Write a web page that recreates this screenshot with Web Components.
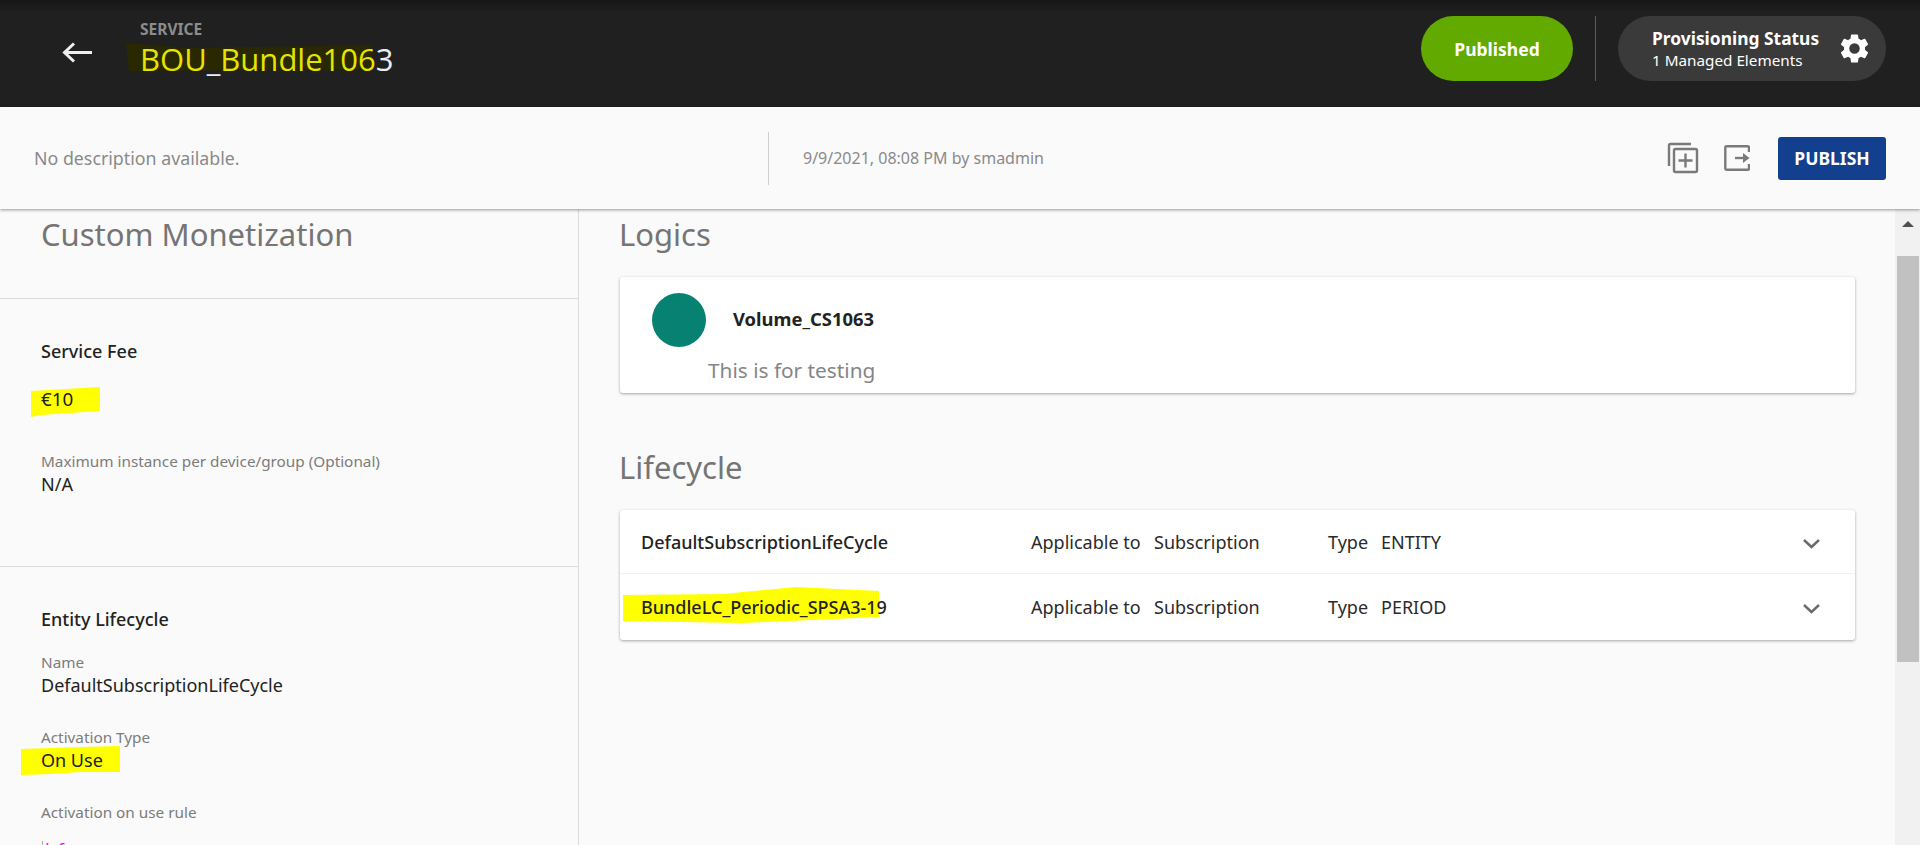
<!DOCTYPE html>
<html>
<head>
<meta charset="utf-8">
<title>BOU_Bundle1063</title>
<style>
    html, body{
        margin: 0;
        height: 845px;
        overflow: hidden;
        background: #fafafa;
        font-family: "Noto Sans", "Open Sans", sans-serif;
    }
</style>
</head>
<body>
<service-page></service-page>

<template id="tpl-topbar">
    <style>
        :host{
            display: flex;
            align-items: center;
            height: 107px;
            box-sizing: border-box;
            padding: 0 34px 10px 62px;
            background: linear-gradient(#161616 0, #202020 12px);
            color: #fff;
        }
        .back{ width: 30px; height: 21px; margin-right: 48px; margin-top: 8px; }
        .names{ flex: 1; position: relative; top: 1px; }
        .kind{ font-size: 15.5px; font-weight: 700; color: #8c8c8c; line-height: 18px; }
        .title{ position: relative; font-size: 31px; line-height: 42px; color: #e4e400; white-space: nowrap; font-family: "Open Sans", sans-serif; }
        .title span{ position: relative; }
        .title .rest{ color: #e8eef4; }
        .smear{ position: absolute; left: -14px; top: 5px; width: 246px; height: 32px; }
        .status{
            display: flex; align-items: center; justify-content: center;
            width: 152px; height: 65px; border-radius: 33px;
            background: #62aa00; font-size: 17.5px; font-weight: 700;
        }
        .sep{ width: 1px; height: 65px; margin: 0 22px; background: #5c5c5c; }
        .prov{
            display: flex; align-items: center; justify-content: space-between;
            width: 268px; height: 65px; box-sizing: border-box;
            padding: 0 14px 0 34px; border-radius: 33px; background: #3a3a3a;
        }
        .prov b{ display: block; font-size: 17.4px; line-height: 24px; }
        .prov small{ display: block; font-size: 15.25px; line-height: 21px; }
        .gear{ width: 35px; height: 35px; }
    </style>
    <svg class="back" viewBox="0 0 30 21" fill="none" stroke="#eeeeee" stroke-width="3"><path d="M30 10.5H3M12 1.5L2.5 10.5L12 19.5"/></svg>
    <div class="names">
        <div class="kind">SERVICE</div>
        <div class="title">
            <svg class="smear" viewBox="0 0 246 32"><path d="M0 0L60 5L246 2V26L120 27L3 28Z" fill="#2a2800"/></svg>
            <span>BOU<span class="rest">_</span>Bundle106<span class="rest">3</span></span>
        </div>
    </div>
    <div class="status">Published</div>
    <div class="sep"></div>
    <div class="prov">
        <div><b>Provisioning Status</b><small>1 Managed Elements</small></div>
        <svg class="gear" viewBox="0 0 24 24" fill="#fff"><path d="M19.14 12.94c.04-.3.06-.61.06-.94s-.02-.64-.07-.94l2.03-1.58a.49.49 0 0 0 .12-.61l-1.92-3.32a.49.49 0 0 0-.59-.22l-2.39.96a7 7 0 0 0-1.62-.94l-.36-2.54a.48.48 0 0 0-.48-.41h-3.84a.48.48 0 0 0-.47.41l-.36 2.54c-.59.24-1.13.57-1.62.94l-2.39-.96a.49.49 0 0 0-.59.22L2.74 8.87a.48.48 0 0 0 .12.61l2.03 1.58c-.05.3-.09.63-.09.94s.02.64.07.94l-2.03 1.58a.49.49 0 0 0-.12.61l1.92 3.32c.12.22.37.29.59.22l2.39-.96c.5.38 1.03.7 1.62.94l.36 2.54c.05.24.24.41.48.41h3.84c.24 0 .44-.17.47-.41l.36-2.54c.59-.24 1.13-.56 1.62-.94l2.39.96c.22.08.47 0 .59-.22l1.92-3.32a.48.48 0 0 0-.12-.61zM12 15.6A3.6 3.6 0 1 1 12 8.4a3.6 3.6 0 0 1 0 7.2z"/></svg>
    </div>
</template>

<template id="tpl-toolbar">
    <style>
        :host{
            display: flex;
            align-items: center;
            position: relative;
            z-index: 2;
            height: 102px;
            box-sizing: border-box;
            padding: 0 34px 0 34px;
            background: #fafafa;
            box-shadow: 0 1px 3px rgba(0,0,0,.4);
        }
        .desc{ width: 734px; font-size: 17.8px; color: #8a8a8a; }
        .sep{ width: 1px; height: 53px; background: #cfcfcf; margin-right: 34px; }
        .date{ flex: 1; font-size: 16px; color: #8a8a8a; }
        .copy{ width: 32px; height: 32px; margin-right: 25px; }
        .export{ width: 26px; height: 26px; margin-right: 28px; }
        button{
            width: 108px; height: 43px; border: 0; border-radius: 3px;
            background: #12408f; color: #fff; font: 700 17.5px "Noto Sans", sans-serif;
        }
    </style>
    <div class="desc">No description available.</div>
    <div class="sep"></div>
    <div class="date">9/9/2021, 08:08 PM by smadmin</div>
    <svg class="copy" viewBox="0 0 32 32" fill="none" stroke="#7a7a7a" stroke-width="2.4">
        <path d="M2 24V3.5A1.5 1.5 0 0 1 3.500 2H24"/>
        <rect x="7" y="7" width="23" height="23" rx="1.500"/>
        <path d="M18.500 11.500V25.500M11.500 18.500H25.500"/>
    </svg>
    <svg class="export" viewBox="0 0 26 26" fill="none" stroke="#7a7a7a" stroke-width="2.4">
        <path d="M25 7V2.500A1.200 1.200 0 0 0 23.800 1.300H2.500A1.200 1.200 0 0 0 1.300 2.500V23.500A1.200 1.200 0 0 0 2.500 24.700H23.800A1.200 1.200 0 0 0 25 23.500V19"/>
        <path d="M11 13H20"/>
        <path d="M19 8L25.500 13L19 18Z" fill="#7a7a7a" stroke="none"/>
    </svg>
    <button>PUBLISH</button>
</template>

<template id="tpl-marker">
    <style>
        :host{ display: inline-block; position: relative; }
        svg{ position: absolute; z-index: 0; fill: #ffff00; overflow: visible; }
        span{ position: relative; z-index: 1; }
    </style>
    <svg><path></path></svg><span><slot></slot></span>
</template>

<template id="tpl-field">
    <style>
        :host{ display: block; margin-bottom: 28px; }
        .label{ font-size: 15.3px; line-height: 22px; color: #7c7c7c; white-space: nowrap; }
        .value{ font-size: 18px; line-height: 25px; color: #222; white-space: nowrap; }
    </style>
    <div class="label"><slot name="label"></slot></div>
    <div class="value"><slot></slot></div>
</template>

<template id="tpl-side">
    <style>
        :host{
            display: block;
            box-sizing: border-box;
            width: 579px;
            height: 636px;
            overflow: hidden;
            border-right: 1px solid #dcdcdc;
        }
        h1{ margin: 0; height: 89px; box-sizing: border-box; padding: 7px 0 0 41px; font-size: 31px; line-height: 36px; font-weight: 400; color: #757575; }
        section{ border-top: 1px solid #dcdcdc; padding: 40px 41px 0; box-sizing: border-box; }
        .fee{ height: 268px; }
        h2{ margin: 0; font-size: 18px; line-height: 24px; font-weight: 500; color: #222; }
        .amount{ margin: 24px 0 39px; font-size: 18.8px; line-height: 24px; color: #222; }
        .life h2{ margin-bottom: 20px; }
        .rule{
            display: block;
            margin: 15px 0 0 1px;
            padding-left: 3px;
            color: #ff00ff;
            letter-spacing: 8px;
            background: linear-gradient(#aaaaaa, #aaaaaa) 0 3px / 1px 100% no-repeat;
        }
    </style>
    <h1>Custom Monetization</h1>
    <section class="fee">
        <h2>Service Fee</h2>
        <div class="amount"><hi-marker x="-10" y="0" w="69" h="30" d="M0 4L69 0V24L10 28L0 30Z">€10</hi-marker></div>
        <info-field><span slot="label">Maximum instance per device/group (Optional)</span>N/A</info-field>
    </section>
    <section class="life">
        <h2>Entity Lifecycle</h2>
        <info-field><span slot="label">Name</span>DefaultSubscriptionLifeCycle</info-field>
        <info-field><span slot="label">Activation Type</span><hi-marker x="-20" y="-2" w="99" h="29" d="M0 3L60 1L99 0V26L60 26L30 28L0 29Z">On Use</hi-marker></info-field>
        <info-field><span slot="label">Activation on use rule</span><span class="rule">if</span></info-field>
    </section>
</template>

<template id="tpl-logic">
    <style>
        :host{
            display: block;
            box-sizing: border-box;
            height: 116px;
            background: #fff;
            border-radius: 3px;
            box-shadow: 0 1px 3px rgba(0,0,0,.35);
            padding: 16px 32px 0;
        }
        .row{ display: flex; align-items: center; gap: 27px; }
        .dot{ width: 54px; height: 54px; border-radius: 50%; background: #078272; }
        b{ font-size: 18.4px; line-height: 24px; margin-top: -2px; color: #222; }
        p{ margin: 10px 0 0 56px; font-size: 20.8px; line-height: 26px; color: #858585; }
    </style>
    <div class="row"><div class="dot"></div><b><slot name="name"></slot></b></div>
    <p><slot></slot></p>
</template>

<template id="tpl-row">
    <style>
        :host{
            display: grid;
            grid-template-columns: 390px 123px 174px 53px 1fr 17px;
            align-items: center;
            height: 64px;
            box-sizing: border-box;
            padding: 0 35px 0 21px;
            font-size: 18px;
            color: #2a2a2a;
            white-space: nowrap;
        }
        :host(:not(:last-child)){ border-bottom: 1px solid #f0f0f0; }
        :host(:last-child){ height: 66px; }
        .name{ font-weight: 500; color: #222; }
        svg{ width: 17px; height: 10px; margin-top: 4px; }
    </style>
    <div class="name"><slot name="name"></slot></div>
    <div>Applicable to</div>
    <div><slot name="target"></slot></div>
    <div>Type</div>
    <div><slot name="kind"></slot></div>
    <svg viewBox="0 0 17 10" fill="none" stroke="#6a6a6a" stroke-width="2.400"><path d="M1 1L8.500 8L16 1"/></svg>
</template>

<template id="tpl-main">
    <style>
        :host{ display: block; flex: 1; padding: 7px 40px 0 41px; min-width: 0; }
        h1{ margin: 0 0 25px; margin-left: -1px; font-size: 31px; line-height: 36px; font-weight: 400; color: #757575; }
        .gap{ margin-top: 56px; }
        .card{ background: #fff; border-radius: 3px; box-shadow: 0 1px 3px rgba(0,0,0,.35); }
    </style>
    <h1>Logics</h1>
    <logic-card><span slot="name">Volume_CS1063</span>This is for testing</logic-card>
    <h1 class="gap">Lifecycle</h1>
    <div class="card">
        <lifecycle-row>
            <span slot="name">DefaultSubscriptionLifeCycle</span>
            <span slot="target">Subscription</span>
            <span slot="kind">ENTITY</span>
        </lifecycle-row>
        <lifecycle-row>
            <span slot="name"><hi-marker x="-18" y="-9" w="256" h="37" d="M0 9L100 8L173 1L256 5V31L120 37L0 35Z">BundleLC_Periodic_SPSA3-19</hi-marker></span>
            <span slot="target">Subscription</span>
            <span slot="kind">PERIOD</span>
        </lifecycle-row>
    </div>
</template>

<template id="tpl-scroll">
    <style>
        :host{ display: block; width: 25px; background: #f1f1f1; flex: none; }
        .up{ height: 47px; display: flex; justify-content: center; padding-top: 8px; box-sizing: border-box; }
        .up i{ border: 6px solid transparent; border-top: 0; border-bottom: 6px solid #505050; width: 0; height: 0; margin: 4px 0 0 1px; }
        .thumb{ height: 406px; margin: 0 1px 0 2px; background: #c1c1c1; }
    </style>
    <div class="up"><i></i></div>
    <div class="thumb"></div>
</template>

<template id="tpl-page">
    <style>
        :host{ display: flex; flex-direction: column; height: 845px; overflow: hidden; }
        .content{ display: flex; height: 636px; }
    </style>
    <top-bar></top-bar>
    <tool-bar></tool-bar>
    <div class="content">
        <side-panel></side-panel>
        <main-panel></main-panel>
        <scroll-rail></scroll-rail>
    </div>
</template>

<script>
// every element just clones its own template in the shadow root
class baseElement extends HTMLElement{
    constructor(){
        super();
        this.attachShadow({mode: "open"});
        this.shadowRoot.appendChild(document.getElementById(this.constructor.tpl).content.cloneNode(true));
    }
}

class hiMarker extends baseElement{
    static tpl = "tpl-marker";
    connectedCallback(){
        const svg = this.shadowRoot.querySelector("svg");
        const w = this.getAttribute("w"), h = this.getAttribute("h");
        svg.setAttribute("width", w);
        svg.setAttribute("height", h);
        svg.setAttribute("viewBox", `0 0 ${w} ${h}`);
        svg.style.left = this.getAttribute("x") + "px";
        svg.style.top = this.getAttribute("y") + "px";
        svg.firstElementChild.setAttribute("d", this.getAttribute("d"));
    }
}

const parts = {
    "top-bar": "tpl-topbar",
    "tool-bar": "tpl-toolbar",
    "info-field": "tpl-field",
    "side-panel": "tpl-side",
    "logic-card": "tpl-logic",
    "lifecycle-row": "tpl-row",
    "main-panel": "tpl-main",
    "scroll-rail": "tpl-scroll",
    "service-page": "tpl-page"
};

customElements.define("hi-marker", hiMarker);
for (const name in parts) {
    customElements.define(name, class extends baseElement{
        static tpl = parts[name];
    });
}
</script>
</body>
</html>
